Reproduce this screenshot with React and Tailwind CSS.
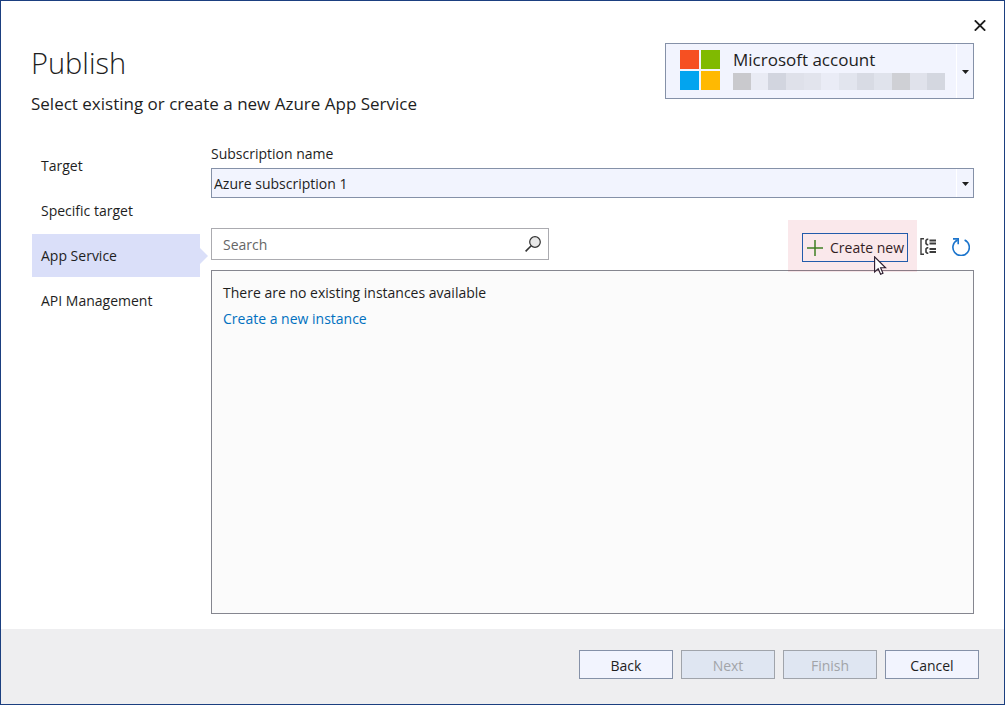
import React, { useState } from 'react';

const steps = ['Target', 'Specific target', 'App Service', 'API Management'];

const maskColors = [
  'bg-[#c9c9cd]',
  'bg-[#e9ebf4]',
  'bg-[#d2d5df]',
  'bg-[#dfe1ea]',
  'bg-[#e2e4ed]',
  'bg-[#eaecf6]',
  'bg-[#e2e5ee]',
  'bg-[#d8dbe4]',
  'bg-[#e0e3ec]',
  'bg-[#cfd0d5]',
  'bg-[#e0e2eb]',
  'bg-[#d4d7e0]',
];

const Caret = () => (
  <svg width="7" height="4" viewBox="0 0 7 4" aria-hidden="true">
    <path d="M0 0h7L3.5 4z" fill="#1e1e1e" />
  </svg>
);

const TopBar = () => (
  <div className="flex h-[42px] items-end justify-end px-4 pb-2.5">
    <button type="button" aria-label="Close" className="flex size-4 items-center justify-center">
      <svg width="12" height="11" viewBox="0 0 12 11" fill="none" stroke="#1e1e1e" strokeWidth="1.8">
        <path d="M0.8 0.3 11.2 10.7M11.2 0.3 0.8 10.7" />
      </svg>
    </button>
  </div>
);

const AccountPicker = () => (
  <button type="button" className="flex h-14 w-[309px] border border-[#8591a8] bg-[#f2f4fe] text-left">
    <span className="flex flex-1 self-stretch pl-3.5 pt-1.5">
      <span className="grid size-10 grid-cols-2 gap-0.5">
        <span className="bg-[#f65022]" />
        <span className="bg-[#80ba01]" />
        <span className="bg-[#02a4ef]" />
        <span className="bg-[#ffb902]" />
      </span>
      <span className="ml-[13px] w-[212px]">
        <span className="block pb-1 text-[17px] leading-[19px]">Microsoft account</span>
        <span className="grid h-[17px] grid-cols-12">
          {maskColors.map((color, i) => (
            <span key={i} className={color} />
          ))}
        </span>
      </span>
    </span>
    <span className="flex w-[17px] items-center justify-center self-stretch border-l border-white pt-0.5">
      <Caret />
    </span>
  </button>
);

const StepList = ({ current, setCurrent }) => (
  <nav className="flex w-[168px] shrink-0 flex-col gap-0.5">
    {steps.map((step) => (
      <button
        key={step}
        type="button"
        onClick={() => setCurrent(step)}
        className={`relative h-[43px] px-[9px] text-left ${step === current ? 'bg-[#dadff9]' : ''}`}
      >
        {step}
        {step === current && (
          <svg className="absolute left-full top-3.5" width="8" height="16" viewBox="0 0 8 16" aria-hidden="true">
            <path d="M0 0 8 8 0 16z" fill="#dadff9" />
          </svg>
        )}
      </button>
    ))}
  </nav>
);

const SearchBox = () => {
  const [searchTerm, setSearchTerm] = useState('');

  return (
    <div className="flex h-8 w-[338px] items-center border border-[#ababb0] bg-white pl-[11px] pr-[7px]">
      <input
        type="text"
        aria-label="Search"
        placeholder="Search"
        value={searchTerm}
        onChange={(e) => setSearchTerm(e.target.value)}
        className="min-w-0 flex-1 pt-0.5 outline-none placeholder:text-[#666]"
      />
      <svg width="16" height="16" viewBox="0 0 16 16" aria-hidden="true">
        <circle cx="10" cy="6" r="5.3" fill="#e8e8e8" stroke="#333" strokeWidth="1.2" />
        <path d="M6.2 9.8 0.6 15.4" stroke="#333" strokeWidth="1.6" />
      </svg>
    </div>
  );
};

const Toolbar = () => (
  <div className="flex h-[39px] items-start justify-between">
    <SearchBox />
    <div className="flex items-center gap-3 self-center pr-1">
      <div className="relative">
        <button
          type="button"
          className="flex h-[29px] w-[106px] items-center justify-between whitespace-nowrap border border-[#0f62b8] pl-1 pr-[3px]"
        >
          <svg width="16" height="16" viewBox="0 0 16 16" stroke="#2f8a20" strokeWidth="1.5" aria-hidden="true">
            <path d="M8 0v16M0 8h16" />
          </svg>
          Create new
        </button>
        <div className="pointer-events-none absolute -bottom-2.5 -left-3.5 -right-[9px] -top-[13px] bg-[#cd1937]/10" />
        <svg
          className="pointer-events-none absolute left-[72px] top-[23px] z-10"
          width="13"
          height="19"
          viewBox="0 0 13 19"
          aria-hidden="true"
        >
          <path
            d="M0.6 0.8v15.2l3.6-3.3 2.4 5.6 2.4-1-2.4-5.5h5z"
            fill="#fff"
            stroke="#2a1a2c"
            strokeWidth="1.1"
          />
        </svg>
      </div>
      <div className="flex items-center gap-4 pb-0.5">
        <button type="button" aria-label="Group">
          <svg width="16" height="17" viewBox="0 0 16 17" fill="none" stroke="#3c3c3c">
            <path d="M4 0.8H1v15.4h3" strokeWidth="1.4" />
            <path d="M8.3 1.3H7.2L6 2.4v3.2l1.2 1.1h1.1M8.3 9.8H7.2L6 10.9v3.2l1.2 1.1h1.1" strokeWidth="1.6" />
            <path d="M9.5 2.5H16M9.5 5.5H16M9.5 11H16M9.5 14H16" strokeWidth="1.8" />
          </svg>
        </button>
        <button type="button" aria-label="Refresh">
          <svg width="18" height="18" viewBox="0 0 18 18" fill="none" stroke="#1b74cc" strokeWidth="1.6">
            <path d="M12.6 2A8.2 8.2 0 1 1 5.6 2" />
            <path d="M1 0.9h5.2v5.4" />
          </svg>
        </button>
      </div>
    </div>
  </div>
);

const FooterButton = ({ children, disabled }) => (
  <button
    type="button"
    disabled={disabled}
    className={`h-[29px] w-[94px] border pt-0.5 ${
      disabled ? 'border-[#a0a4ab] bg-[#dfe6f2] text-[#a2a4a8]' : 'border-[#8591a8] bg-[#f2f4fe]'
    }`}
  >
    {children}
  </button>
);

const App = () => {
  const [current, setCurrent] = useState('App Service');

  return (
    <div className="flex min-h-screen flex-col border border-[#1b3f80] bg-white font-['Open_Sans',sans-serif] text-[14px] leading-5 text-[#1e1e1e]">
      <TopBar />

      <header className="flex items-start justify-between px-[30px]">
        <div>
          <h1 className="text-[29px] font-light leading-10">Publish</h1>
          <p className="mt-[9px] text-[17px] leading-6">Select existing or create a new Azure App Service</p>
        </div>
        <AccountPicker />
      </header>

      <main className="flex flex-1 gap-[11px] pb-[15px] pl-[31px] pr-[30px] pt-7">
        <StepList current={current} setCurrent={setCurrent} />

        <section className="flex min-w-0 flex-1 flex-col">
          <label htmlFor="subscription">Subscription name</label>
          <div className="relative mt-1">
            <select
              id="subscription"
              className="block h-[30px] w-full appearance-none border border-[#8591a8] bg-[#f2f4fe] pl-0.5 pr-5 pt-0.5"
            >
              <option>Azure subscription 1</option>
            </select>
            <span className="pointer-events-none absolute inset-y-px right-px flex w-[17px] items-center justify-center border-l border-white pt-0.5">
              <Caret />
            </span>
          </div>

          <div className="mt-[30px]">
            <Toolbar />
          </div>

          <div className="mt-[3px] flex-1 border border-[#85868f] bg-[#fbfbfb] px-[11px] py-3">
            <p>There are no existing instances available</p>
            <a href="#" className="mt-1.5 inline-block text-[#0070c0]">
              Create a new instance
            </a>
          </div>
        </section>
      </main>

      <footer className="flex h-[75px] items-center justify-end gap-2 bg-[#eeeef0] pb-1 pr-[25px]">
        <FooterButton>Back</FooterButton>
        <FooterButton disabled>Next</FooterButton>
        <FooterButton disabled>Finish</FooterButton>
        <FooterButton>Cancel</FooterButton>
      </footer>
    </div>
  );
};

export default App;
